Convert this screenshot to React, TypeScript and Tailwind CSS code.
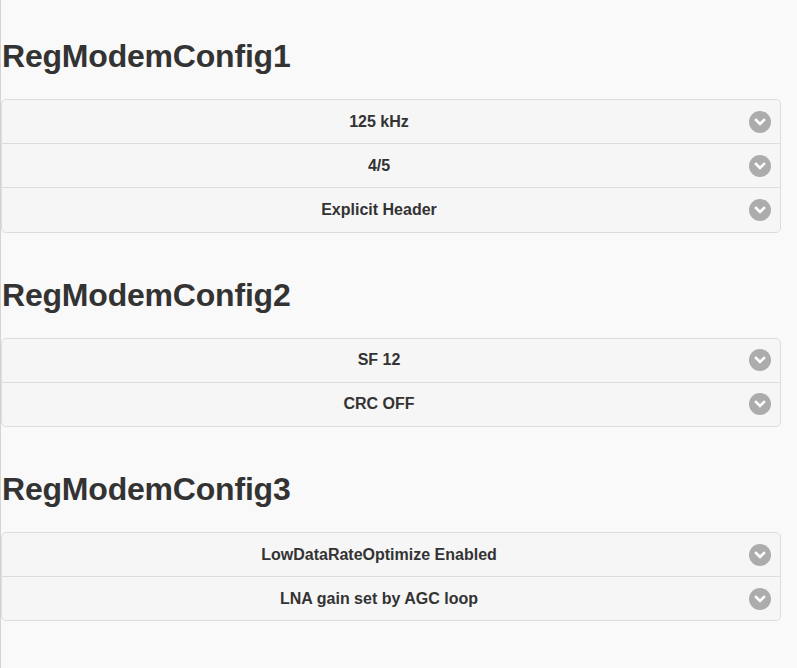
import React from "react";

const Chevron = () => (
  <span className="absolute right-[9px] top-1/2 -translate-y-1/2 w-[22px] h-[22px] rounded-full bg-[#acacac] flex items-center justify-center">
    <svg width="14" height="14" viewBox="0 0 14 14">
      <polyline points="3,5 7,9 11,5" fill="none" stroke="#fff" strokeWidth="2.6" strokeLinecap="square" strokeLinejoin="miter" />
    </svg>
  </span>
);

const Group = ({ title, items }: { title: string; items: string[] }) => (
  <div>
    <h1 className="text-[32px] leading-[37px] font-bold text-[#333] pl-[1px] tracking-[-0.2px]">{title}</h1>
    <ul className="mt-6 w-[780px] border border-[#dddddd] rounded-[5px] overflow-hidden bg-[#f6f6f6]">
      {items.map((it, i) => (
        <li
          key={it}
          className={`relative flex items-center pl-4 pr-10 ${i > 0 ? "h-[44.2px] border-t border-[#dddddd]" : "h-[43.2px]"}`}
        >
          <span className="flex-1 text-center text-[16px] font-bold text-[#333]">{it}</span>
          <Chevron />
        </li>
      ))}
    </ul>
  </div>
);

export default function App() {
  return (
    <div
      className="min-h-[668px] bg-[#f9f9f9] border-l border-[#d4d4d4] pt-[38px]"
      style={{ fontFamily: '"Liberation Sans", Arial, sans-serif' }}
    >
      <div className="flex flex-col gap-[44px]">
        <Group title="RegModemConfig1" items={["125 kHz", "4/5", "Explicit Header"]} />
        <Group title="RegModemConfig2" items={["SF 12", "CRC OFF"]} />
        <Group title="RegModemConfig3" items={["LowDataRateOptimize Enabled", "LNA gain set by AGC loop"]} />
      </div>
    </div>
  );
}
